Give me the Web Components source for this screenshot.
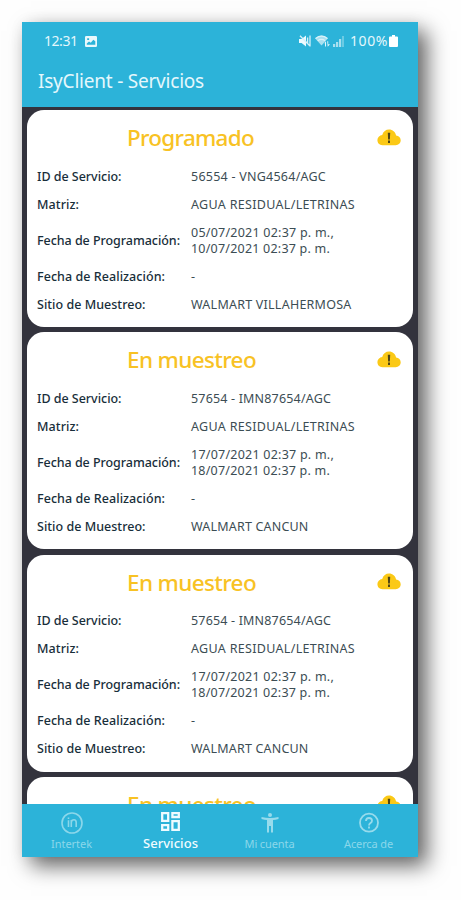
<!DOCTYPE html>
<html lang="es">
<head>
<meta charset="utf-8">
<title>IsyClient - Servicios</title>
<style>
  body {
    margin: 0;
    height: 900px;
    overflow: hidden;
    background: #fefefe;
    font-family: "Noto Sans", "Open Sans", sans-serif;
  }
</style>
</head>
<body>
<isy-app></isy-app>

<script>
// Single line of text, tracked so that it fills the given width
class FitText extends HTMLElement {
  constructor () {
    super()
    this.attachShadow({ mode: 'open' }).innerHTML = `
    <style>
    :host{
        display: block;
        width: max-content;
        white-space: nowrap;
    }
    </style>
    <slot></slot>`
  }

  connectedCallback () {
    const target = parseFloat(this.getAttribute('width'))
    if (!target) return
    const natural = this.getBoundingClientRect().width
    const count = this.textContent.length
    this.style.letterSpacing = (target - natural) / count + 'px'
  }
}

class StatusBar extends HTMLElement {
  constructor () {
    super()
    this.attachShadow({ mode: 'open' }).innerHTML = `
    <style>
    :host{
        display: flex;
        align-items: center;
        height: 38px;
        padding: 0 20px 0 22px;
        color: #e4f7fc;
        font-size: 14px;
        line-height: 18px;
    }
    svg{ display: block; }
    .photo{ margin-left: 7px; }
    .right{
        display: flex;
        align-items: center;
        margin-left: auto;
    }
    .wifi{ margin-left: 4px; }
    .signal{ margin: 0 6px 0 3px; }
    </style>
    <fit-text width="33.5">12:31</fit-text>
    <svg class="photo" width="12" height="11" viewBox="0 0 12 11">
      <path fill="#e9f8fc" fill-rule="evenodd" d="M1.2 0H10.8Q12 0 12 1.2V9.8Q12 11 10.8 11H1.2Q0 11 0 9.8V1.2Q0 0 1.2 0ZM1.8 8.8H10.3V5.3L8.3 3.8L5.8 6.8L4 5.6L1.8 7.6ZM2.2 2.2V4.1H4.1V2.2Z"/>
    </svg>
    <div class="right">
      <svg width="12" height="12" viewBox="0 0 12 12">
        <path fill="#eefaff" d="M0 4H2.6L7 .5V11.5L2.6 8H0Z"/>
        <path fill="none" stroke="#d5f1fa" stroke-width="1.3" d="M8.6 2.5V9M11 .5V11.5M1 .8L11 11"/>
      </svg>
      <svg class="wifi" width="15" height="12" viewBox="0 0 15 12">
        <path fill="#a9e0f0" d="M0 3.2Q6.5 -2 13 3.2L6.5 10.5Z"/>
        <path fill="none" stroke="#d8f2f9" stroke-width="1.2" d="M.6 3.4Q6.5 -1 12.4 3.4M2.7 5.7Q6.5 3 10 5.7"/>
        <path fill="#e4f7fc" d="M9.2 8.2L11 6.2V11.5H10V8.2ZM12.2 6.2H13.2V9.2H15L12.7 11.7Z"/>
      </svg>
      <svg class="signal" width="11" height="11" viewBox="0 0 11 11">
        <path fill="#a9e0f0" d="M0 8H2.2V11H0ZM3 6H5.2V11H3ZM6 3H8.2V11H6Z"/>
        <path fill="#6bcbe4" d="M9 0H11V11H9Z"/>
      </svg>
      <fit-text width="38">100%</fit-text>
      <svg style="margin-left:1px" width="9" height="12" viewBox="0 0 9 12">
        <path fill="#fff" d="M3 0H6V1.5H8Q9 1.5 9 2.5V11Q9 12 8 12H1Q0 12 0 11V2.5Q0 1.5 1 1.5H3Z"/>
      </svg>
    </div>`
  }
}

class AlertCloud extends HTMLElement {
  constructor () {
    super()
    this.attachShadow({ mode: 'open' }).innerHTML = `
    <style>
    :host{ display: block; }
    svg{ display: block; }
    </style>
    <svg width="24" height="17" viewBox="0 0 24 17">
      <path fill="#fbc916" d="M5.5 16.2C2.4 16.2.4 14 .4 11.1C.4 8.2 2.5 6.2 5.2 5.9C6.3 2.6 8.8.6 12 .6C15.6.6 18.4 3 19.1 6.5C21.8 6.7 23.7 8.7 23.7 11.3C23.7 14.1 21.6 16.2 18.6 16.2Z"/>
      <path fill="#4f4614" d="M10.8 3.8H13.2L12.9 10.4H11.1ZM11 11.6H13V14H11Z"/>
    </svg>`
  }
}

class ServiceCard extends HTMLElement {
  constructor () {
    super()
    this.attachShadow({ mode: 'open' }).innerHTML = `
    <style>
    :host{
        display: block;
        box-sizing: border-box;
        flex: none;
        height: 217px;
        padding-left: 10px;
        border-radius: 17px;
        background: #fff;
        overflow: hidden;
    }
    .top{
        display: flex;
        justify-content: space-between;
        align-items: flex-start;
        height: 52.6px;
        padding: 0 12px 0 90px;
        box-sizing: border-box;
        color: #f8c224;
        font-size: 22.5px;
        font-weight: 550;
        line-height: 30px;
    }
    .top ::slotted(fit-text){ margin-top: 13px; }
    alert-cloud{ margin-top: 18.5px; }
    </style>
    <div class="top"><slot name="title"></slot><alert-cloud></alert-cloud></div>
    <slot></slot>`
  }
}

class ServiceField extends HTMLElement {
  constructor () {
    super()
    this.attachShadow({ mode: 'open' }).innerHTML = `
    <style>
    :host{
        display: grid;
        grid-template-columns: 154px 1fr;
        align-items: center;
        height: 28px;
        font-size: 12.5px;
        line-height: 16px;
        color: #3c4d54;
    }
    :host([tall]){ height: 44px; }
    .label{
        color: #182e3a;
        font-weight: 500;
    }
    </style>
    <div class="label"><slot name="label"></slot></div>
    <div><slot></slot></div>`
  }
}

class NavItem extends HTMLElement {
  constructor () {
    super()
    this.attachShadow({ mode: 'open' }).innerHTML = `
    <style>
    :host{
        display: flex;
        flex: 1;
        flex-direction: column;
        align-items: center;
        padding-top: 8px;
        color: #8bd7ea;
        font-size: 11px;
        line-height: 16px;
    }
    :host([active]){
        color: #f2fcff;
        font-size: 13px;
        font-weight: 500;
    }
    .icon{
        display: flex;
        height: 24px;
    }
    :host([active]) .icon{ height: 23px; }
    </style>
    <div class="icon"><slot name="icon"></slot></div>
    <slot></slot>`
  }
}

const services = [
  { state: 'Programado', sw: 127, id: '56554 - VNG4564/AGC', iw: 135, dates: ['05/07/2021 02:37 p. m.,', '10/07/2021 02:37 p. m.'], site: 'WALMART VILLAHERMOSA', ww: 160.5 },
  { state: 'En muestreo', sw: 129, id: '57654 - IMN87654/AGC', iw: 140, dates: ['17/07/2021 02:37 p. m.,', '18/07/2021 02:37 p. m.'], site: 'WALMART CANCUN', ww: 117.5 },
  { state: 'En muestreo', sw: 129, id: '57654 - IMN87654/AGC', iw: 140, dates: ['17/07/2021 02:37 p. m.,', '18/07/2021 02:37 p. m.'], site: 'WALMART CANCUN', ww: 117.5 }
]

function card (s) {
  return `
    <service-card>
      <fit-text slot="title" width="${s.sw}">${s.state}</fit-text>
      <service-field><fit-text slot="label" width="84.5">ID de Servicio:</fit-text><fit-text width="${s.iw}">${s.id}</fit-text></service-field>
      <service-field><fit-text slot="label" width="42">Matriz:</fit-text><fit-text width="164">AGUA RESIDUAL/LETRINAS</fit-text></service-field>
      <service-field tall><fit-text slot="label" width="143">Fecha de Programación:</fit-text><fit-text width="143">${s.dates[0]}</fit-text><fit-text width="139">${s.dates[1]}</fit-text></service-field>
      <service-field><fit-text slot="label" width="128">Fecha de Realización:</fit-text><fit-text>-</fit-text></service-field>
      <service-field><fit-text slot="label" width="108.5">Sitio de Muestreo:</fit-text><fit-text width="${s.ww}">${s.site}</fit-text></service-field>
    </service-card>`
}

class IsyApp extends HTMLElement {
  constructor () {
    super()
    this.shadowDOM = this.attachShadow({ mode: 'open' })
  }

  connectedCallback () {
    this.render()
  }

  render () {
    this.shadowDOM.innerHTML = `
    <style>
    :host{
        display: flex;
        flex-direction: column;
        width: 396px;
        height: 835px;
        margin: 22px 0 0 22px;
        background: #33333d;
        box-shadow: 9px 9px 20px 0 rgba(0, 0, 0, .6), 0 0 14px rgba(0, 0, 0, .05);
    }
    header{
        flex: none;
        height: 85px;
        background: #2cb3d9;
    }
    h1{
        margin: 7px 0 0 16px;
        color: #e4f7fc;
        font-size: 19px;
        font-weight: 400;
        line-height: 28px;
    }
    main{
        display: flex;
        flex: 1;
        flex-direction: column;
        gap: 5.3px;
        min-height: 0;
        padding: 3px 5px 0;
        overflow: hidden;
    }
    nav{
        display: flex;
        flex: none;
        height: 53px;
        background: #2cb3d9;
    }
    svg{ display: block; }
    </style>
    <header>
      <status-bar></status-bar>
      <h1><fit-text width="166">IsyClient - Servicios</fit-text></h1>
    </header>
    <main>${services.map(card).join('')}
      <service-card><fit-text slot="title" width="129">En muestreo</fit-text></service-card>
    </main>
    <nav>
      <nav-item>
        <svg slot="icon" width="22" height="22" viewBox="0 0 22 22" fill="none" stroke="#8bd7ea" stroke-width="1.6">
          <circle cx="11" cy="11" r="10"/>
          <path d="M7.5 8.2V15M7.5 5.6V7M10.3 15V8M10.3 10.5Q10.5 7.8 13 7.8Q15.2 7.8 15.2 10.5V15"/>
        </svg>
        <fit-text width="41">Intertek</fit-text>
      </nav-item>
      <nav-item active>
        <svg slot="icon" width="19" height="19" viewBox="0 0 19 19" fill="none" stroke="#eefbff" stroke-width="2.3">
          <path d="M1.2 1.2H7.2V8.8H1.2ZM11.4 1.2H17.8V5H11.4ZM1.2 13.2H7.2V17.8H1.2ZM11.4 9.2H17.8V17.8H11.4Z"/>
        </svg>
        <fit-text width="55">Servicios</fit-text>
      </nav-item>
      <nav-item>
        <svg slot="icon" width="18" height="22" viewBox="0 0 18 22" fill="#97dbec">
          <circle cx="9" cy="3" r="2"/>
          <path d="M.5 5Q9 7.2 17.5 5V7Q14.5 7.8 12 8V20.5H10V14H8V20.5H6V8Q3.5 7.8 .5 7Z"/>
        </svg>
        <fit-text width="50">Mi cuenta</fit-text>
      </nav-item>
      <nav-item>
        <svg slot="icon" width="20" height="22" viewBox="0 0 20 22" fill="none" stroke="#97dbec" stroke-width="1.8">
          <circle cx="10" cy="10.7" r="9"/>
          <path d="M7 9Q7 6 10 6Q13 6 13 8.7Q13 10 11.5 11.1Q10 12.2 10 13.5M10 14.6V16.6"/>
        </svg>
        <fit-text width="49">Acerca de</fit-text>
      </nav-item>
    </nav>`
  }
}

customElements.define('isy-app', IsyApp)
customElements.define('status-bar', StatusBar)
customElements.define('alert-cloud', AlertCloud)
customElements.define('service-card', ServiceCard)
customElements.define('service-field', ServiceField)
customElements.define('nav-item', NavItem)
// defined last: it measures itself, so its parents must be styled first
customElements.define('fit-text', FitText)
</script>
</body>
</html>
